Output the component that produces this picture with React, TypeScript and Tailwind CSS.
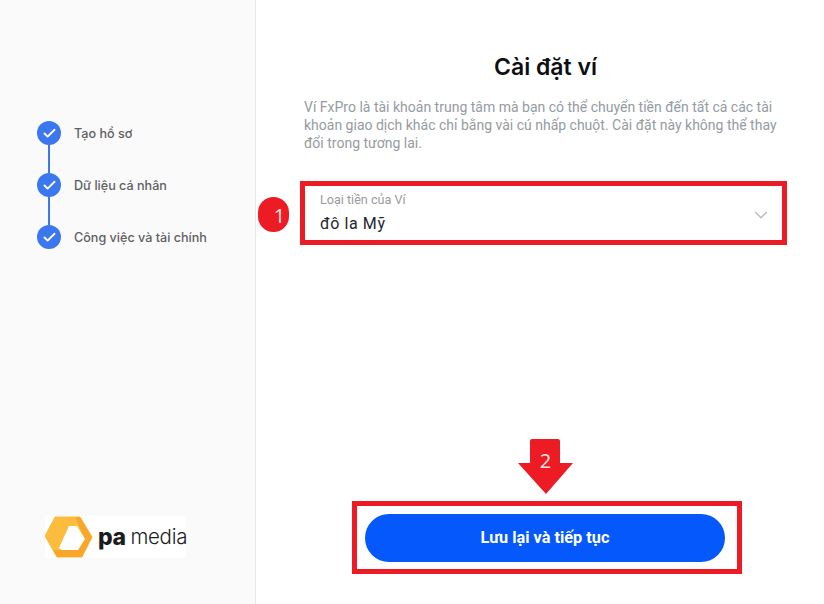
import { Check, ChevronDown } from "lucide-react";

const steps = ["Tạo hồ sơ", "Dữ liệu cá nhân", "Công việc và tài chính"];

const App = () => {
  return (
    <div className="flex w-[824px] h-[604px] overflow-hidden bg-white font-['Inter',sans-serif]">
      {/* Sidebar */}
      <aside className="w-[256px] shrink-0 bg-[#fafafa] border-r border-[#e8e8e8] flex flex-col pl-[37px] pt-[121px]">
        <div className="flex flex-col">
          {steps.map((step, i) => (
            <div key={step} className="flex flex-col">
              <div className="flex items-center gap-[13px] h-6">
                <div className="w-6 h-6 rounded-full bg-[#3b78f0] flex items-center justify-center">
                  <Check size={15} strokeWidth={3} className="text-white" />
                </div>
                <span className="text-[12.6px] mt-[3px] font-medium text-[#5f5f63]">{step}</span>
              </div>
              {i < steps.length - 1 && <div className="w-0.5 h-7 bg-[#3b78f0] ml-[11px]" />}
            </div>
          ))}
        </div>

        {/* Logo */}
        <div className="mt-[267px] ml-[8px] flex items-center w-[141px] h-[42px] bg-white">
          <svg width="48" height="42" viewBox="0 0 48 42" className="shrink-0">
            <path d="M10 1 H35 L47 21 L37 41 H12 L0 20 Z" fill="#fcbd3f" stroke="#fcbd3f" strokeWidth="1" strokeLinejoin="round" />
            <path d="M30 1 H35 L47 21 L37 41 H12 L8 34 H33 L40 23 Z" fill="#f9a72b" />
            <path d="M24 10 H32 L40 23 L33 34 H17 L14 32 Z" fill="#ffffff" />
          </svg>
          <span className="ml-[5px] text-[23px] font-extrabold text-[#1c1c1c] leading-none tracking-[-0.5px]">pa</span>
          <span className="ml-[5px] text-[20.5px] font-light text-[#1c1c1c] leading-none tracking-[-0.3px]">media</span>
        </div>
      </aside>

      {/* Main */}
      <main className="flex-1 flex flex-col pl-[44px] pr-[37px] pt-[51px]">
        <h1 className="text-[23px] font-semibold text-[#0d0f14] text-center leading-8 pl-[4px]">Cài đặt ví</h1>
        <p className="mt-[15px] pl-[4px] text-[14px] leading-[18px] text-[#959ba1] font-['Roboto',sans-serif]">
          Ví FxPro là tài khoản trung tâm mà bạn có thể chuyển tiền đến tất cả các tài khoản giao dịch khác chỉ bằng vài cú nhấp chuột. Cài đặt này không thể thay đổi trong tương lai.
        </p>

        {/* Select with annotation */}
        <div className="relative mt-[29px] h-[64px] border-[5px] border-[#ed1c24] flex items-center justify-between pl-[15px] pr-[10px] font-['Roboto',sans-serif]">
          <div className="flex flex-col -mt-[1px]">
            <span className="text-[12.6px] leading-4 text-[#9a9a9f]">Loại tiền của Ví</span>
            <span className="mt-[6px] text-[16px] leading-5 tracking-[0.6px] text-[#23262b]">đô la Mỹ</span>
          </div>
          <ChevronDown size={22} strokeWidth={1.5} className="text-[#b8bcc0] mt-[4px]" />
          <div className="absolute left-[-47px] top-[11px] w-[31px] h-[35px] rounded-full bg-[#ed1c24] flex items-center justify-center pl-[12px] pt-[2px] text-[20px] text-[#fbe3e3] font-['Open_Sans',sans-serif]">
            1
          </div>
        </div>

        {/* Arrow and button */}
        <div className="mt-[194px] flex flex-col">
          <div className="relative w-[55px] h-[55px] ml-[218px]">
            <svg width="55" height="55" viewBox="0 0 55 55">
              <path d="M12 2 a2 2 0 0 1 2 -2 H40 a2 2 0 0 1 2 2 V24 H55 L28 55 L0 24 H12 Z" fill="#ed1c24" />
            </svg>
            <span className="absolute inset-x-0 top-[10px] text-center text-[20px] leading-6 text-[#fbe3e3] font-['Open_Sans',sans-serif]">2</span>
          </div>
          <div className="mt-[7px] ml-[52px] w-[390px] h-[73px] border-[5px] border-[#ed1c24] flex pl-[8px] pt-[8px]">
            <button className="w-[360px] h-[48px] rounded-full bg-[#0558fb] text-white text-[16.3px] font-bold font-['Roboto',sans-serif]">
              Lưu lại và tiếp tục
            </button>
          </div>
        </div>
      </main>
    </div>
  );
};

export default App;
